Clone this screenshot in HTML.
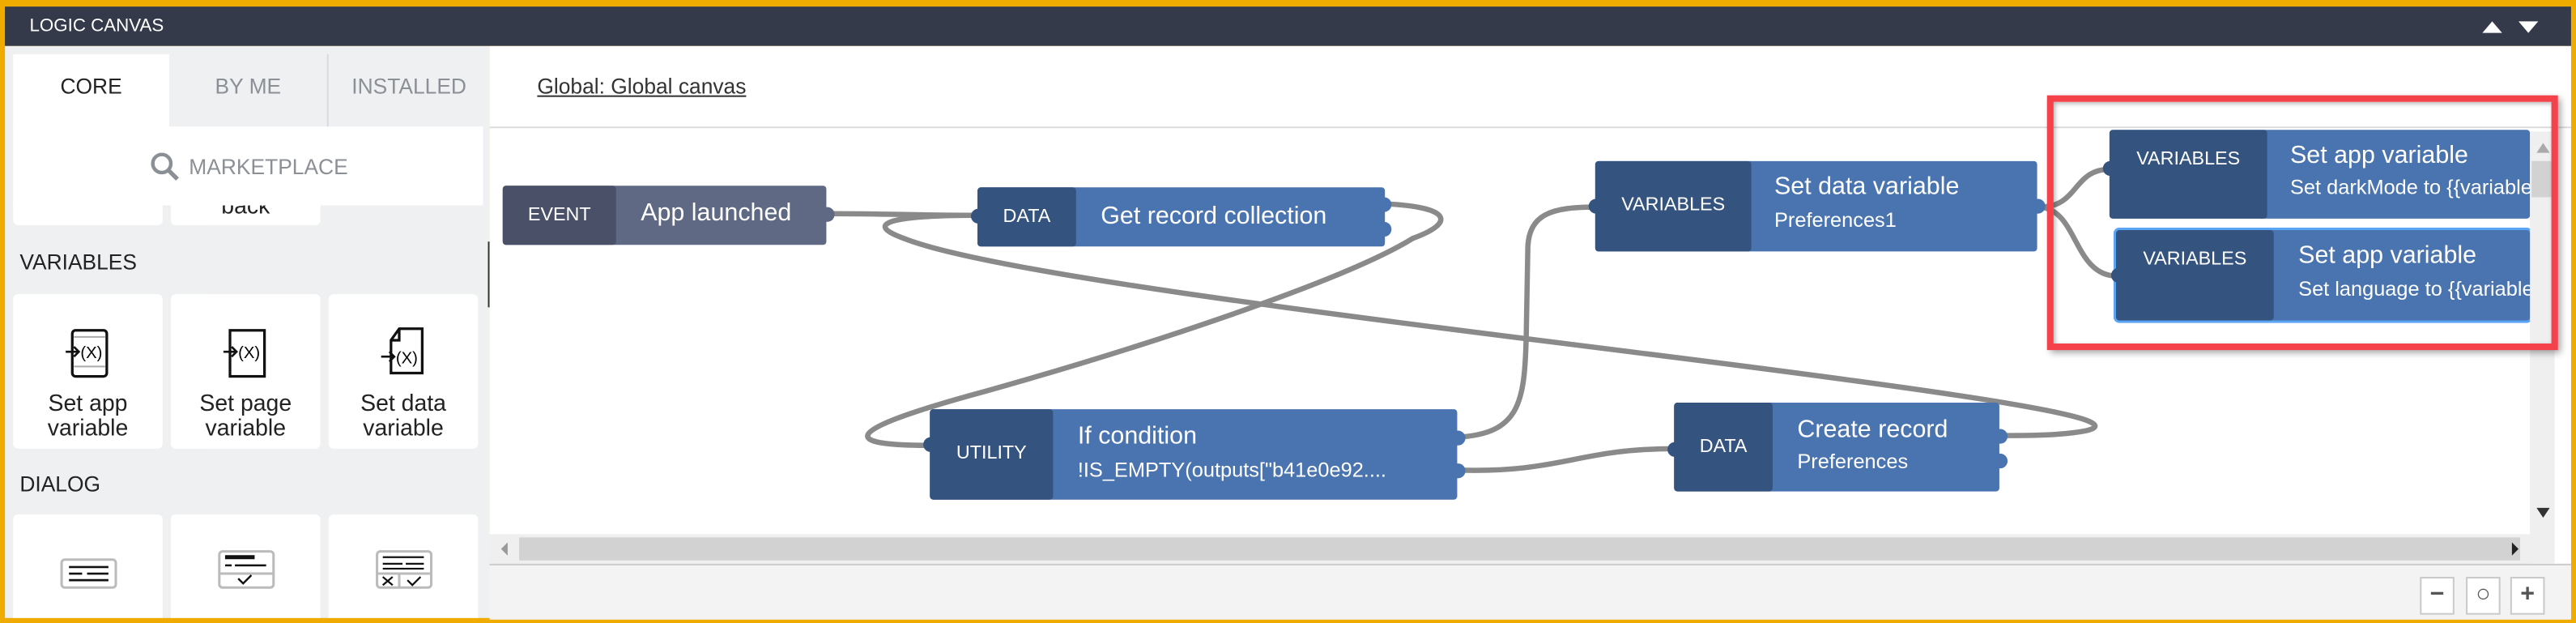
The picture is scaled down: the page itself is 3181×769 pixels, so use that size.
<!DOCTYPE html>
<html><head><meta charset="utf-8"><style>
html,body{margin:0;padding:0;width:3181px;height:768px;overflow:hidden;background:#f0ab00;}
#s{position:absolute;left:0;top:0;width:1568px;height:379px;transform:scale(2.0287);transform-origin:0 0;font-family:"Liberation Sans",sans-serif;}
.a{position:absolute;}
.hdr{left:3px;top:4px;width:1562px;height:24px;background:#353a4a;color:#fff;font-size:11px;line-height:24px;}
.lp{left:3px;top:28px;width:295px;height:348px;background:#eef0f2;overflow:hidden;}
.tab{top:5px;height:45px;font-size:13px;line-height:40px;text-align:center;color:#8b8f96;}
.card{background:#fff;border-radius:3px;width:91px;}
.ct{font-size:14px;color:#222;text-align:center;line-height:15px;width:91px;}
.cv{left:298px;top:28px;width:1267px;height:348px;background:#fff;}
.node{position:absolute;border-radius:2px;overflow:visible;}
.nl{position:absolute;left:0;top:0;bottom:0;border-radius:2px;color:#fff;font-size:11.5px;text-align:center;}
.nr{position:absolute;top:0;bottom:0;right:0;color:#fff;}
.t{position:absolute;left:14px;font-size:15px;white-space:nowrap;}
.st{position:absolute;left:14px;font-size:12.5px;white-space:nowrap;}
.pt{position:absolute;width:9px;height:9px;border-radius:50%;}
.zb{top:351px;width:19px;height:21px;border:1px solid #c9c9c9;background:#fff;font-size:15px;text-align:center;line-height:20px;color:#555;font-weight:bold;}
</style></head><body><div id="s">
<div class="a hdr"><span style="margin-left:15px">LOGIC CANVAS</span>
<svg class="a" style="left:1508px;top:8px" width="40" height="9"><path d="M0 8L6 1L12 8Z M22 1L34 1L28 8Z" fill="#fff"/></svg></div>
<div class="a lp">
 <div class="a tab" style="left:5px;width:95px;background:#fff;color:#222;">CORE</div>
 <div class="a tab" style="left:100px;width:96px;">BY ME</div>
 <div class="a" style="left:196px;top:5px;width:1px;height:45px;background:#d8dadd"></div>
 <div class="a tab" style="left:197px;width:98px;">INSTALLED</div>
 <div class="a card" style="left:5px;top:92px;height:17px"></div>
 <div class="a card" style="left:101px;top:92px;height:17px;overflow:hidden"><div class="ct" style="margin-top:-2px">back</div></div>
 <div class="a" style="left:5px;top:49px;width:286px;height:48px;background:#fff;"></div>
 <svg class="a" style="left:88px;top:64px" width="20" height="20"><circle cx="7.5" cy="7.5" r="5.5" fill="none" stroke="#8b8f96" stroke-width="2.2"/><path d="M11.5 11.5L17 17" stroke="#8b8f96" stroke-width="2.6"/></svg>
 <div class="a" style="left:112px;top:66px;font-size:13px;color:#8b8f96">MARKETPLACE</div>
 <div class="a" style="left:9px;top:124px;font-size:13px;color:#222">VARIABLES</div>
 <div class="a card" style="left:5px;top:151px;height:94px"></div>
 <div class="a card" style="left:101px;top:151px;height:94px"></div>
 <div class="a card" style="left:197px;top:151px;height:94px"></div>
 <svg class="a" style="left:36px;top:171px" width="30" height="32"><rect x="5" y="2" width="21" height="28" rx="2" fill="none" stroke="#111" stroke-width="1.6"/><path d="M6 6H25M6 24H25" stroke="#aaa"/><path d="M1 15H9M6 12L9 15L6 18" fill="none" stroke="#111" stroke-width="1.3"/><text x="10" y="19" font-size="10" font-family="Liberation Sans">(X)</text></svg>
 <svg class="a" style="left:132px;top:171px" width="30" height="32"><rect x="5" y="2" width="21" height="28" fill="none" stroke="#111" stroke-width="1.6"/><path d="M1 15H9M6 12L9 15L6 18" fill="none" stroke="#111" stroke-width="1.3"/><text x="10" y="19" font-size="10" font-family="Liberation Sans">(X)</text></svg>
 <svg class="a" style="left:228px;top:170px" width="30" height="32"><path d="M12 2H26V29H7V9Z M7 9H12V2" fill="none" stroke="#111" stroke-width="1.6"/><path d="M1 19H9M6 16L9 19L6 22" fill="none" stroke="#111" stroke-width="1.3"/><text x="10" y="23" font-size="10" font-family="Liberation Sans">(X)</text></svg>
 <div class="a ct" style="left:5px;top:210px">Set app<br>variable</div>
 <div class="a ct" style="left:101px;top:210px">Set page<br>variable</div>
 <div class="a ct" style="left:197px;top:210px">Set data<br>variable</div>
 <div class="a" style="left:9px;top:259px;font-size:13px;color:#222">DIALOG</div>
 <div class="a card" style="left:5px;top:285px;height:70px"></div>
 <div class="a card" style="left:101px;top:285px;height:70px"></div>
 <div class="a card" style="left:197px;top:285px;height:70px"></div>
 <svg class="a" style="left:33px;top:311px" width="36" height="22"><rect x="1.5" y="1.5" width="33" height="17" rx="2" fill="#fff" stroke="#bbb" stroke-width="1.5"/><path d="M6 6H30M6 10H14M17 10H30M6 14H30" stroke="#111" stroke-width="1.3"/></svg>
 <svg class="a" style="left:129px;top:306px" width="36" height="26"><rect x="1.5" y="1.5" width="33" height="22" rx="2" fill="#fff" stroke="#bbb" stroke-width="1.5"/><path d="M1.5 15H34" stroke="#bbb" stroke-width="1.5"/><path d="M5 5H23" stroke="#111" stroke-width="2.5"/><path d="M5 10H9M11 10H30M13 18L16 21L21 16" fill="none" stroke="#111" stroke-width="1.2"/></svg>
 <svg class="a" style="left:225px;top:306px" width="36" height="26"><rect x="1.5" y="1.5" width="33" height="22" rx="2" fill="#fff" stroke="#bbb" stroke-width="1.5"/><path d="M1.5 15H34M15 15V24" stroke="#bbb" stroke-width="1.5"/><path d="M5 5H30M5 9H17M19 9H30M5 12H30M5 17L11 22M11 17L5 22M20 19L23 22L28 17" fill="none" stroke="#111" stroke-width="1.1"/></svg>
 <div class="a" style="left:294px;top:119px;width:1px;height:40px;background:#333"></div>
</div>
<div class="a cv">
 <div class="a" style="left:29px;top:17px;font-size:13px;color:#333;text-decoration:underline;">Global: Global canvas</div>
 <div class="a" style="left:0;top:49px;width:1267px;height:1px;background:#ddd"></div>
 <div class="a" style="left:0;top:297px;width:1244px;height:18px;background:#efefef"></div>
 <div class="a" style="left:18px;top:299px;width:1218px;height:14px;background:#d2d2d2"></div>
 <svg class="a" style="left:5px;top:301px" width="8" height="10"><path d="M6 1L2 5L6 9Z" fill="#999"/></svg>
 <svg class="a" style="left:1229px;top:301px" width="8" height="10"><path d="M2 1L6 5L2 9Z" fill="#222"/></svg>
 <div class="a" style="left:0;top:315px;width:1267px;height:33px;background:#f3f3f3;border-top:1px solid #ccc"></div>
</div>
<div class="a zb" style="left:1473px">−</div>
<div class="a zb" style="left:1501px">○</div>
<div class="a zb" style="left:1528px">+</div>

<svg class="a" style="left:0;top:0" width="1568" height="379">
<g fill="none" stroke="#8a8a8a" stroke-width="3.2" stroke-linecap="round">
<path d="M505 130 C540 130 560 131 595 131"/>
<path d="M843 124 C885 126 885 136 860 145 C820 170 700 210 600 238 C500 265 520 271 566 271"/>
<path d="M595 131 C555 131 520 134 550 145 C600 165 800 190 1000 215 C1200 240 1300 255 1270 262 C1255 265 1235 265 1217 265"/>
<path d="M887 266 C925 264 928 245 929 205 L930 150 C931 130 945 126 971 126"/>
<path d="M887 286 C950 288 960 273 1019 273"/>
<path d="M1242 126 C1265 126 1262 103 1284 103"/>
<path d="M1242 126 C1265 128 1262 168 1289 168"/>
</g></svg>

<div class="node" style="left:306px;top:113px;width:197px;height:36px;background:#5f6984">
 <div class="nl" style="width:69px;background:#4a5068;line-height:36px">EVENT</div>
 <div class="t" style="left:84px;top:8px;color:#fff">App launched</div>
 <div class="pt" style="left:193px;top:13px;background:#5f6984"></div></div>
<div class="node" style="left:595px;top:114px;width:248px;height:36px;background:#4a74b0">
 <div class="nl" style="width:60px;background:#34537f;line-height:36px">DATA</div>
 <div class="t" style="left:75px;top:9px;color:#fff">Get record collection</div>
 <div class="pt" style="left:-4px;top:13px;background:#34537f"></div>
 <div class="pt" style="left:243px;top:6px;background:#4a74b0"></div>
 <div class="pt" style="left:243px;top:21px;background:#4a74b0"></div></div>
<div class="node" style="left:971px;top:98px;width:269px;height:55px;background:#4a74b0">
 <div class="nl" style="width:95px;background:#34537f;line-height:55px">VARIABLES</div>
 <div class="t" style="left:109px;top:7px;color:#fff">Set data variable</div>
 <div class="st" style="left:109px;top:29px;color:#fff">Preferences1</div>
 <div class="pt" style="left:-4px;top:23px;background:#34537f"></div>
 <div class="pt" style="left:265px;top:23px;background:#4a74b0"></div></div>
<div class="node" style="left:566px;top:249px;width:321px;height:55px;background:#4a74b0">
 <div class="nl" style="width:75px;background:#34537f;line-height:55px">UTILITY</div>
 <div class="t" style="left:90px;top:8px;color:#fff">If condition</div>
 <div class="st" style="left:90px;top:30px;color:#fff">!IS_EMPTY(outputs["b41e0e92....</div>
 <div class="pt" style="left:-4px;top:17px;background:#34537f"></div>
 <div class="pt" style="left:317px;top:13px;background:#4a74b0"></div>
 <div class="pt" style="left:317px;top:33px;background:#4a74b0"></div></div>
<div class="node" style="left:1019px;top:245px;width:198px;height:54px;background:#4a74b0">
 <div class="nl" style="width:60px;background:#34537f;line-height:54px">DATA</div>
 <div class="t" style="left:75px;top:8px;color:#fff">Create record</div>
 <div class="st" style="left:75px;top:29px;color:#fff">Preferences</div>
 <div class="pt" style="left:-4px;top:24px;background:#34537f"></div>
 <div class="pt" style="left:194px;top:16px;background:#4a74b0"></div>
 <div class="pt" style="left:194px;top:31px;background:#4a74b0"></div></div>
<div class="node" style="left:1284px;top:79px;width:256px;height:54px;background:#4a74b0;overflow:hidden">
 <div class="nl" style="width:96px;background:#34537f;line-height:36px">VARIABLES</div>
 <div class="t" style="left:110px;top:7px;color:#fff">Set app variable</div>
 <div class="st" style="left:110px;top:28px;color:#fff">Set darkMode to {{variables</div></div>
<div class="pt" style="left:1280px;top:98px;background:#34537f"></div>
<div class="node" style="left:1288px;top:140px;width:252px;height:55px;background:#4a74b0;overflow:hidden;box-shadow:0 0 0 1.5px #5aa5f5">
 <div class="nl" style="width:96px;background:#34537f;line-height:36px">VARIABLES</div>
 <div class="t" style="left:111px;top:7px;color:#fff">Set app variable</div>
 <div class="st" style="left:111px;top:29px;color:#fff">Set language to {{variables</div></div>
<div class="pt" style="left:1285px;top:163px;background:#34537f"></div>
<div class="a" style="left:1540px;top:80px;width:15px;height:263px;background:#efefef"></div>
<div class="a" style="left:1541px;top:98px;width:12px;height:22px;background:#d2d2d2"></div>
<svg class="a" style="left:1543px;top:86px" width="10" height="8"><path d="M1 7L9 7L5 1Z" fill="#aaa"/></svg>
<svg class="a" style="left:1543px;top:308px" width="10" height="8"><path d="M1 1L9 1L5 7Z" fill="#333"/></svg>
<div class="a" style="left:1246px;top:58px;width:303px;height:147px;border:4px solid #f5414a;box-shadow:2px 2px 4px rgba(0,0,0,.35), inset 1px 1px 3px rgba(0,0,0,.3)"></div>
</div></body></html>
